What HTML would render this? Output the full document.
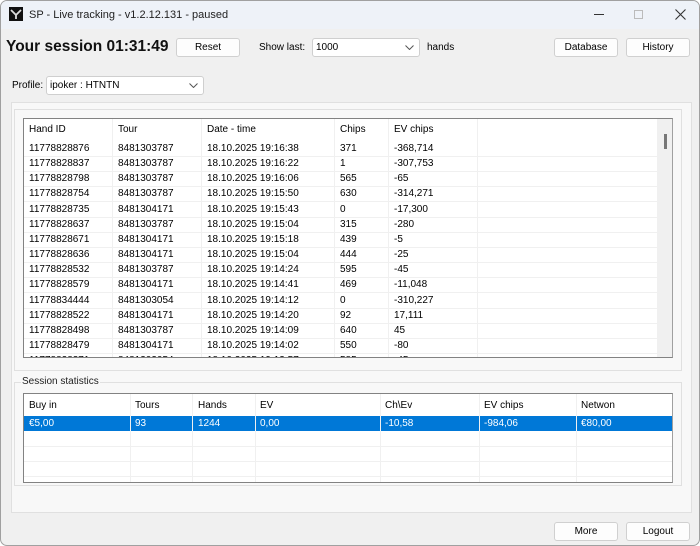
<!DOCTYPE html>
<html><head><meta charset="utf-8"><style>
*{box-sizing:border-box;margin:0;padding:0}
body{width:700px;height:546px;overflow:hidden;background:#fff;font-family:"Liberation Sans",sans-serif;font-size:10px;color:#000;position:relative}
.a{position:absolute}
.win{left:0;top:0;width:700px;height:546px;background:#f0f0f0;border:1px solid #a0a0a0;border-radius:7px;overflow:hidden}
.tb{left:0;top:0;width:700px;height:28px;background:#eef2f8}
.btn{position:absolute;background:#fdfdfd;border:1px solid #d0d0d0;border-radius:3px;text-align:center;line-height:17px;font-size:10px}
.cmb{position:absolute;background:#fff;border:1px solid #cfcfcf;border-radius:3px;line-height:17px;padding-left:3px;font-size:10px}
.cmb svg{position:absolute;right:5px;top:6px}
.list{position:absolute;background:#fff;border:1px solid #828282;border-right-color:#a0a0a0;overflow:hidden}
.t{position:absolute;white-space:nowrap;font-size:10px}
.vl{position:absolute;width:1px;background:#f0f0f0}
.hl{position:absolute;height:1px;background:#f0f0f0}
</style></head><body>
<div class="a win">
<div class="a tb"></div>
<svg class="a" style="left:8px;top:6px" width="14" height="14" viewBox="0 0 14 14"><rect width="14" height="14" fill="#111"/><path d="M2 3 L7 8 L12 3 M7 8 L7 12" stroke="#ddd" stroke-width="1.8" fill="none"/></svg>
<div class="t" style="left:28px;top:8px;font-size:11px;color:#222">SP - Live tracking - v1.2.12.131 - paused</div>
<div class="a" style="left:593px;top:13px;width:10px;height:1px;background:#333"></div>
<div class="a" style="left:633px;top:9px;width:9px;height:9px;border:1px solid #bbb"></div>
<svg class="a" style="left:674px;top:8px" width="11" height="11"><path d="M0.5 0.5 L10.5 10.5 M10.5 0.5 L0.5 10.5" stroke="#333" stroke-width="1.1"/></svg>

<div class="t" style="left:5px;top:37px;font-size:15.5px;font-weight:bold;color:#111">Your session 01:31:49</div>
<div class="btn" style="left:175px;top:37px;width:64px;height:19px">Reset</div>
<div class="t" style="left:258px;top:41px">Show last:</div>
<div class="cmb" style="left:311px;top:37px;width:108px;height:19px">1000<svg width="9" height="5"><path d="M0.5 0.5 L4.5 4.5 L8.5 0.5" stroke="#555" fill="none"/></svg></div>
<div class="t" style="left:426px;top:41px">hands</div>
<div class="btn" style="left:553px;top:37px;width:64px;height:19px">Database</div>
<div class="btn" style="left:625px;top:37px;width:64px;height:19px">History</div>

<div class="t" style="left:11px;top:79px">Profile:</div>
<div class="cmb" style="left:45px;top:75px;width:158px;height:19px">ipoker : HTNTN<svg width="9" height="5"><path d="M0.5 0.5 L4.5 4.5 L8.5 0.5" stroke="#555" fill="none"/></svg></div>

<div class="a" style="left:10px;top:101px;width:681px;height:411px;background:#f8f8f8;border:1px solid #e0e0e0"></div>
<div class="a" style="left:13px;top:108px;width:668px;height:262px;background:#f8f8f8;border:1px solid #e0e0e0"></div>
<div class="a" style="left:13px;top:381px;width:668px;height:104px;border:1px solid #e0e0e0"></div>
<div class="t" style="left:20px;top:375px;background:#f8f8f8;padding:0 1px;color:#222">Session statistics</div>

<div class="list" style="left:22px;top:117px;width:650px;height:240px">
<div class="a" style="left:633px;top:0;width:15px;height:240px;background:#f0f0f0"></div>
<div class="a" style="left:640px;top:15px;width:3px;height:15px;background:#777"></div>
<div class="vl" style="left:88px;top:0;height:240px"></div>
<div class="vl" style="left:177px;top:0;height:240px"></div>
<div class="vl" style="left:310px;top:0;height:240px"></div>
<div class="vl" style="left:364px;top:0;height:240px"></div>
<div class="vl" style="left:453px;top:0;height:240px"></div>
<div class="t" style="left:5px;top:5px">Hand ID</div><div class="t" style="left:94px;top:5px">Tour</div><div class="t" style="left:183px;top:5px">Date - time</div><div class="t" style="left:316px;top:5px">Chips</div><div class="t" style="left:370px;top:5px">EV chips</div>
<div id="rows"></div>
</div>

<div class="list" style="left:22px;top:392px;width:650px;height:90px">
<div class="a" style="left:0;top:22px;width:648px;height:15px;background:#0078d7"></div>
<div class="vl" style="left:106px;top:0;height:90px"></div>
<div class="vl" style="left:168px;top:0;height:90px"></div>
<div class="vl" style="left:231px;top:0;height:90px"></div>
<div class="vl" style="left:356px;top:0;height:90px"></div>
<div class="vl" style="left:455px;top:0;height:90px"></div>
<div class="vl" style="left:552px;top:0;height:90px"></div>
<div class="hl" style="left:0;top:52px;width:648px"></div>
<div class="hl" style="left:0;top:67px;width:648px"></div>
<div class="hl" style="left:0;top:82px;width:648px"></div>
<div class="t" style="left:5px;top:6px">Buy in</div><div class="t" style="left:111px;top:6px">Tours</div><div class="t" style="left:174px;top:6px">Hands</div><div class="t" style="left:236px;top:6px">EV</div><div class="t" style="left:361px;top:6px">Ch\Ev</div><div class="t" style="left:460px;top:6px">EV chips</div><div class="t" style="left:557px;top:6px">Netwon</div>
<div class="t" style="left:5px;top:24px;color:#fff">€5,00</div><div class="t" style="left:111px;top:24px;color:#fff">93</div><div class="t" style="left:174px;top:24px;color:#fff">1244</div><div class="t" style="left:236px;top:24px;color:#fff">0,00</div><div class="t" style="left:361px;top:24px;color:#fff">-10,58</div><div class="t" style="left:460px;top:24px;color:#fff">-984,06</div><div class="t" style="left:557px;top:24px;color:#fff">€80,00</div>
</div>

<div class="btn" style="left:553px;top:521px;width:64px;height:19px">More</div>
<div class="btn" style="left:625px;top:521px;width:64px;height:19px">Logout</div>
</div>
<script>
var d=[["11778828876","8481303787","18.10.2025 19:16:38","371","-368,714"],["11778828837","8481303787","18.10.2025 19:16:22","1","-307,753"],["11778828798","8481303787","18.10.2025 19:16:06","565","-65"],["11778828754","8481303787","18.10.2025 19:15:50","630","-314,271"],["11778828735","8481304171","18.10.2025 19:15:43","0","-17,300"],["11778828637","8481303787","18.10.2025 19:15:04","315","-280"],["11778828671","8481304171","18.10.2025 19:15:18","439","-5"],["11778828636","8481304171","18.10.2025 19:15:04","444","-25"],["11778828532","8481303787","18.10.2025 19:14:24","595","-45"],["11778828579","8481304171","18.10.2025 19:14:41","469","-11,048"],["11778834444","8481303054","18.10.2025 19:14:12","0","-310,227"],["11778828522","8481304171","18.10.2025 19:14:20","92","17,111"],["11778828498","8481303787","18.10.2025 19:14:09","640","45"],["11778828479","8481304171","18.10.2025 19:14:02","550","-80"],["11778828371","8481303054","18.10.2025 19:13:57","585","-45"]];
var x=[5,94,183,316,370],h="";
for(var i=0;i<d.length;i++){var t=23+i*15.15;h+='<div class="hl" style="left:0;top:'+(t+14)+'px;width:633px"></div>';for(var j=0;j<5;j++)h+='<div class="t" style="left:'+x[j]+'px;top:'+(t+1)+'px">'+d[i][j]+'</div>';}
document.getElementById('rows').innerHTML=h;
</script>
</body></html>
